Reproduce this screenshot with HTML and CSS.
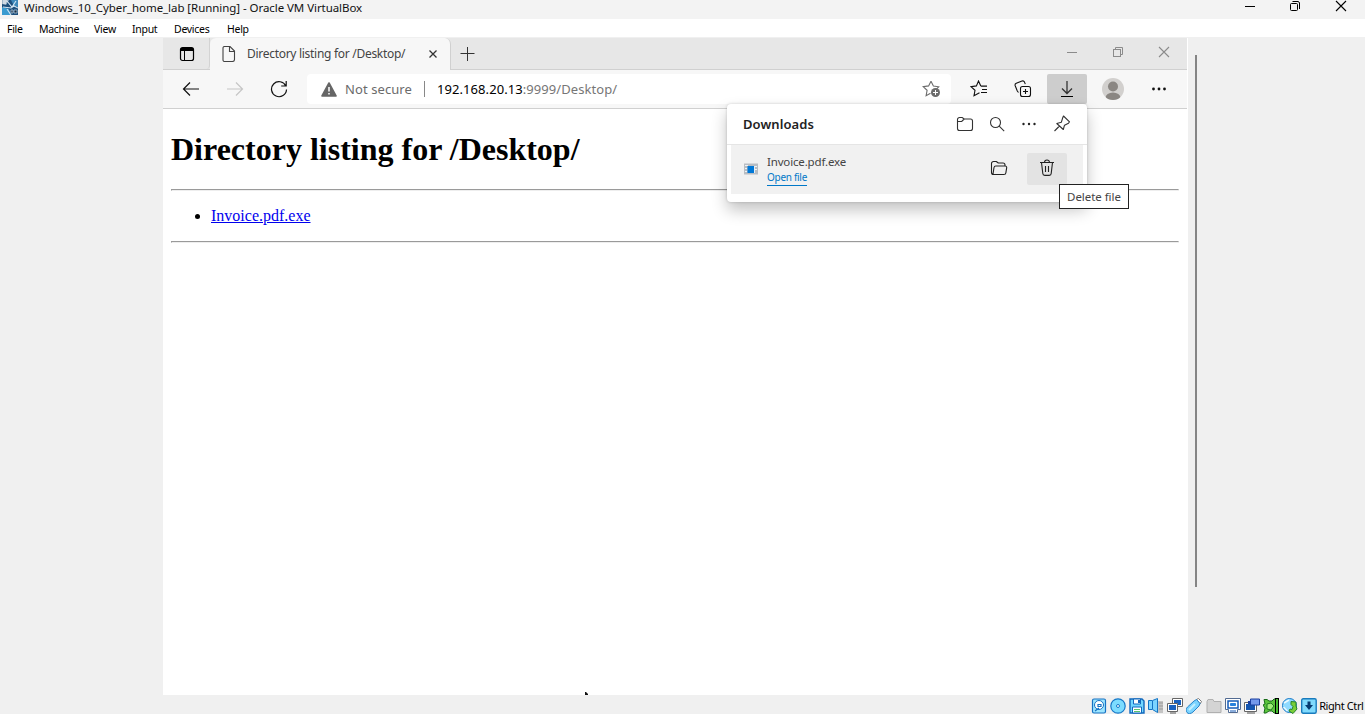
FILE: index.html
```html
<!DOCTYPE html>
<html lang="en">
<head>
<meta charset="utf-8">
<title>Windows_10_Cyber_home_lab [Running] - Oracle VM VirtualBox</title>
<link rel="stylesheet" href="styles.css">
</head>
<body>
<header class="titlebar">
  <svg class="vm-logo" width="16" height="15" viewBox="0 0 16 15">
    <rect width="16" height="15" fill="#1d4f7c"/>
    <path d="M0 0h7L4 5 0 4z" fill="#9eb5c8"/><path d="M1 1h4M1 3h3" stroke="#fff"/>
    <path d="M9 0h7v7l-4-1z" fill="#3d88ba"/><path d="M0 7l7 2 2 6H0z" fill="#3a9bd0"/>
    <path d="M5 1l5 6 4-6M1 7l8 1 3-2 4 2M5 9l4 6" fill="none" stroke="#d5e7f4" stroke-width="1.1"/>
    <path d="M9 10h2v3H9zM12 10h3v3h-3z" fill="#142b43" stroke="#bdd3e5" stroke-width=".7"/>
  </svg>
  <span class="vm-title">Windows_10_Cyber_home_lab [Running] - Oracle VM VirtualBox</span>
  <div class="vm-controls">
    <svg width="46" height="19"><path d="M19 6.500h10" stroke="#000"/></svg>
    <svg width="46" height="19" fill="none" stroke="#000"><rect x="18.500" y="3.500" width="7" height="7" rx="1"/><path d="M20.500 1.500h5.500a2 2 0 0 1 1.500 1.500v6"/></svg>
    <svg width="46" height="19"><path d="M18 1l10 10M28 1L18 11" stroke="#000" stroke-width="1.100"/></svg>
  </div>
</header>
<nav class="menubar">
  <span>File</span><span>Machine</span><span>View</span><span>Input</span><span>Devices</span><span>Help</span>
</nav>
<main class="stage">
  <section class="guest">
    <div class="tabstrip">
      <div class="tab-action"><svg width="16" height="16" fill="none" stroke="#000"><rect x="1.500" y="1.500" width="13" height="13" rx="2" stroke-width="1.200"/><path d="M2 3.500h12" stroke-width="3"/><path d="M5.500 4v10"/></svg></div>
      <div class="tab">
        <svg class="doc" width="14" height="16" fill="none" stroke="#444" stroke-width="1.100"><path d="M2.500.5H8l4.500 4.500v8.500a2 2 0 0 1-2 2h-8a1.500 1.500 0 0 1-1.500-1.500V2A1.500 1.500 0 0 1 2.500.5zM7.500.5v5h5"/></svg>
        <span class="tab-title">Directory listing for /Desktop/</span>
        <svg class="tab-close" width="10" height="10"><path d="M1.500 1.500l7 7M8.500 1.500l-7 7" stroke="#333" stroke-width="1.300"/></svg>
      </div>
      <svg class="new-tab" width="16" height="16"><path d="M8.500 1v14M1.500 7.500h14" stroke="#333"/></svg>
      <div class="win-controls">
        <svg width="46" height="31"><path d="M18 14.500h10" stroke="#8b8b8b"/></svg>
        <svg width="46" height="31" fill="none" stroke="#8b8b8b"><rect x="18.500" y="11.500" width="7" height="7"/><path d="M20.500 11v-1.500h7v7H26"/></svg>
        <svg width="46" height="31"><path d="M18 9l10 10M28 9L18 19" stroke="#8b8b8b" stroke-width="1.100"/></svg>
      </div>
    </div>
    <div class="toolbar">
      <div class="tool"><svg width="18" height="16" fill="none" stroke="#111" stroke-width="1.200"><path d="M17 8H2M8 1.500L1.500 8 8 14.500"/></svg></div>
      <div class="tool"><svg width="18" height="16" fill="none" stroke="#c6c6c6" stroke-width="1.200"><path d="M1 8h15M10 1.500L16.500 8 10 14.500"/></svg></div>
      <div class="tool"><svg width="18" height="18" fill="none" stroke="#111" stroke-width="1.200"><path d="M15.800 6A7.500 7.500 0 1 0 16.500 9.500M16.200 1v5h-5"/></svg></div>
      <div class="address">
        <svg class="warn" width="16" height="15"><path d="M8 1L15 14H1z" fill="#666" stroke="#666" stroke-width="1.600" stroke-linejoin="round"/><path d="M8 5v4.500M8 11v1.500" stroke="#fff" stroke-width="1.500"/></svg>
        <span class="insecure">Not secure</span><i class="divider"></i>
        <span class="url"><b>192.168.20.13</b>:9999/Desktop/</span>
        <svg class="add-star" width="20" height="18" fill="none" stroke="#6c6c6c"><path d="M9 1.200l2.400 4.900 5.300.7-3.900 3.800M8.500 13.300L4.100 15.800l1-5.500L1.200 6.600l5.400-.7L9 1.200" stroke-width="1.100"/><circle cx="13.500" cy="12.500" r="4.500" fill="#6c6c6c" stroke="none"/><path d="M11 12.500h5M13.500 10v5" stroke="#fff"/></svg>
      </div>
      <div class="tool tool-fav"><svg width="18" height="18" fill="none" stroke="#111" stroke-width="1.100"><path d="M10.800 6.100H17M12 9.500h5M11 12.500h6M9.500 12.800L4 15.800l1-5.500-4-3.600 5.400-.8L8.500 1l2.300 5.100"/></svg></div>
      <div class="tool"><svg width="18" height="18" fill="none" stroke="#111" stroke-width="1.100"><rect x="6.500" y="6.500" width="10" height="10" rx="2"/><path d="M11.500 9v5M9 11.500h5M4.500 12.500L3.300 11 1.200 5.800a2 2 0 0 1 1.100-2.500L8 1.100a2 2 0 0 1 2.500 1l.8 2"/></svg></div>
      <div class="dl-button"><svg width="14" height="18" fill="none" stroke="#333" stroke-width="1.300"><path d="M7 1v12M2 8.500l5 5 5-5"/><path d="M1 16.500h12" stroke="#000" stroke-width="1"/></svg></div>
      <div class="tool tool-avatar"><svg width="22" height="22"><defs><clipPath id="face"><circle cx="11" cy="11" r="11"/></clipPath></defs><g clip-path="url(#face)"><rect width="22" height="22" fill="#d2d0ce"/><circle cx="11" cy="8.500" r="5" fill="#8a8682"/><ellipse cx="11" cy="20" rx="7.500" ry="5.500" fill="#8a8682"/></g></svg></div>
      <div class="tool tool-more"><svg width="16" height="4" fill="#111"><circle cx="2.500" cy="2" r="1.400"/><circle cx="8" cy="2" r="1.400"/><circle cx="13.500" cy="2" r="1.400"/></svg></div>
    </div>
    <article class="page">
      <h1>Directory listing for /Desktop/</h1>
      <hr>
      <ul><li><a href="#">Invoice.pdf.exe</a></li></ul>
      <hr>
    </article>
    <aside class="downloads">
      <div class="dl-head">
        <strong>Downloads</strong>
        <div class="dl-icon"><svg width="18" height="16" fill="none" stroke="#333" stroke-width="1.100"><path d="M3.500 1.500h2.700l2 1.500h6.300a2 2 0 0 1 2 2v7.500a2 2 0 0 1-2 2h-11a2 2 0 0 1-2-2v-9a2 2 0 0 1 2-2zM1.500 5.500h4.200L8.200 3"/></svg></div>
        <div class="dl-icon"><svg width="16" height="16" fill="none" stroke="#333" stroke-width="1.100"><circle cx="6.500" cy="6.500" r="5"/><path d="M10.200 10.200l5 5"/></svg></div>
        <div class="dl-icon"><svg width="16" height="4" fill="#222"><circle cx="2.500" cy="2" r="1.200"/><circle cx="8" cy="2" r="1.200"/><circle cx="13.500" cy="2" r="1.200"/></svg></div>
        <div class="dl-icon pin"><svg width="18" height="18" fill="none" stroke="#333" stroke-width="1.100" stroke-linejoin="round"><path d="M10.500 1l6 5.800-1 1.400-4 2-1.200 4.300-6.500-6 4.500-1.200L9.800 2.500zM6.500 11L1.500 16"/></svg></div>
      </div>
      <div class="dl-row">
        <svg class="exe" width="14" height="12"><path d="M0 .5h14v11H0z" fill="#b8bdc3"/><path d="M1 2.500h3M1 5.500h2M1 8.500h2M11 3.500h2M11 6.500h2" stroke="#eef3f7"/><path d="M3.500 3H10v7H3.500z" fill="#0078d7"/><path d="M10 3h1v7h-1z" fill="#e8edf2"/></svg>
        <div class="dl-text"><span class="dl-name">Invoice.pdf.exe</span><a class="dl-open" href="#">Open file</a></div>
        <div class="row-btn"><svg width="18" height="16" fill="none" stroke="#222" stroke-width="1.100" stroke-linejoin="round"><path d="M3.500 14.500a2 2 0 0 1-2-2v-9a2 2 0 0 1 2-2h2.800l2 1.500h4.700a2 2 0 0 1 2 2v1M3 14l1-6.500a1.800 1.800 0 0 1 1.800-1.500h9.400a1.500 1.500 0 0 1 1.500 1.700l-.8 5a2 2 0 0 1-2 1.800H3.500z"/></svg></div>
        <div class="row-btn hot"><svg width="16" height="18" fill="none" stroke="#222" stroke-width="1.100"><path d="M1 3.500h14M5.500 3.500a2.500 2.500 0 0 1 5 0M2.500 3.500l1.300 11a2 2 0 0 0 2 1.900h4.400a2 2 0 0 0 2-1.900l1.300-11M6.500 7v6M9.500 7v6"/></svg></div>
      </div>
      <div class="tooltip">Delete file</div>
    </aside>
    <svg class="cursor" width="4" height="3"><path d="M0 0h1l1 1 1 1v1H0z" fill="#111"/></svg>
  </section>
  <i class="scroll-line"></i>
</main>
<footer class="status">
  <svg width="16" height="16"><rect x="1.500" y="1" width="13" height="14" rx="1.500" fill="#9ce5ff" stroke="#1672c4" stroke-width="1.200"/><circle cx="8" cy="7" r="4.500" fill="#fff" stroke="#1672c4"/><path d="M7 6.500h3v2H7zM4 13l4-3" stroke="#1672c4" fill="none" stroke-width="1.200"/></svg>
  <svg width="16" height="16"><circle cx="8" cy="8" r="7.200" fill="#7cdcff" stroke="#1678c8" stroke-width="1.200"/><circle cx="8" cy="8" r="1.500" fill="#fff" stroke="#1678c8"/></svg>
  <svg width="16" height="16"><path d="M1 1h12l2 2v12H1z" fill="#72d7ff" stroke="#1268bd" stroke-width="1.400"/><path d="M4.500 1h7v5h-7zM3.500 9h9v6h-9z" fill="#fff" stroke="#1268bd"/><path d="M5 11.500h6M5 13.500h6" stroke="#59c46d"/><path d="M9 2h2v3H9z" fill="#1268bd"/></svg>
  <svg width="16" height="16"><path d="M9 3h6v12H9z" fill="#c4c4c4"/><path d="M11 5h4M11 8h4M11 11h4" stroke="#999"/><path d="M.500 2.500h4l5-2v14l-5-3h-4z" fill="#7bd4ff" stroke="#1474c4"/><path d="M4.500 3v8" stroke="#1474c4"/></svg>
  <svg width="16" height="16"><path d="M5.500.5h10v8h-10z" fill="#fff" stroke="#666"/><path d="M7 2h7v5H7z" fill="#1a62c0"/><path d="M.5 5.500h10v8H.5z" fill="#fff" stroke="#666"/><path d="M2 7h7v5H2z" fill="#1a62c0"/><path d="M3 15h6" stroke="#555"/></svg>
  <svg width="16" height="16"><path d="M10.500 1.500l2-1 3 3-1.500 2.500z" fill="#fff" stroke="#777"/><path d="M8 3l2.500-1.500L14 5.500 13 8l-6 6c-2 2-5 2-6 .500-1.500-1.500-1-4 .500-5.500z" fill="#7bd4ff" stroke="#2783c8"/><path d="M3 12l6-6" stroke="#c5efff" stroke-width="2"/></svg>
  <svg width="16" height="16"><path d="M1 14.500v-11l1-2h5l1 2h7v11z" fill="#d4d4d4" stroke="#b0b0b0"/></svg>
  <svg width="16" height="16"><path d="M.5.5h15v11h-3v3h-9v-3h-3z" fill="#fff" stroke="#526b92"/><path d="M3 3h10v7H3z" fill="#fff" stroke="#145bb8" stroke-width="1.500"/><path d="M5.500 5.500h5v2h-5z" fill="#2781dd" stroke="#2781dd"/><path d="M5 13h6" stroke="#145bb8"/></svg>
  <svg width="16" height="16"><path d="M.5 4.500h12v9H.5z" fill="#fff" stroke="#666"/><path d="M2 6h9v6H2z" fill="#1455ae"/><path d="M6.500 1h9v6h-9z" fill="#7398eb" stroke="#1b3fa0"/><path d="M4 3h2.500v3H4z" fill="#1b3fa0"/><path d="M3 15h8" stroke="#555"/></svg>
  <svg width="16" height="16"><path d="M1 1.500h3l2 1.500h3l2-2h2v14h-2l-2-2H6l-3 2H1l1-5-2-3 2-1z" fill="#5bc43c" stroke="#176b18"/><path d="M4 6l4-1 3 3-3 4-4-1z" fill="#a0ec77" stroke="#1f7a20"/><path d="M12 0h4v16h-4z" fill="#000"/><path d="M13 1h2v14h-2z" fill="#44bd2e"/></svg>
  <svg width="16" height="16"><circle cx="7.500" cy="7.500" r="7" fill="#8edaff" stroke="#1678c8"/><path d="M2 5l5-3M1.500 9l4 4" stroke="#e9faff" stroke-width="1.500"/><path d="M9 3.500l5 .5v4l1 3-4 4.500-4-2.500 1-2 2 .5 1-3-2-2z" fill="#79ce38" stroke="#278329"/></svg>
  <svg width="16" height="16"><rect x=".7" y=".7" width="14.500" height="14.500" rx="1.500" fill="#80dafd" stroke="#197bbd" stroke-width="1.400"/><path d="M6.500 3.500h3V7H12l-4 5-4-5h2.500z" fill="#073a70"/></svg>
  <span class="host-key">Right Ctrl</span>
</footer>
</body>
</html>
```
FILE: styles.css
```css
* { box-sizing: border-box; }
body { margin: 0; width: 1365px; height: 714px; overflow: hidden; display: flex; flex-direction: column; background: #f0f0f0; color: #000; font-family: "Noto Sans", "Open Sans", sans-serif; }
svg { display: block; flex: none; }
span, strong { white-space: nowrap; }
.titlebar { height: 19px; flex: none; display: flex; background: #f3f3f3; padding: 0 1px 0 2px; }
.vm-title { margin-left: 6px; font-size: 11.5px; line-height: 15px; letter-spacing: -.06px; color: #111; }
.vm-controls { display: flex; margin-left: auto; }
.menubar { height: 18px; flex: none; display: grid; grid-template-columns: 32px 55px 38px 42px 53px 30px; background: #fff; padding-left: 7px; font-size: 10.5px; line-height: 20px; letter-spacing: -.28px; }
.stage { height: 658px; flex: none; display: flex; padding: 1px 0 0 163px; }
.guest { position: relative; width: 1025px; height: 657px; flex: none; display: flex; flex-direction: column; background: #fff; }
.tabstrip { width: 1024px; height: 32px; flex: none; display: flex; background: #e7e7e7; border-bottom: 1px solid #d0d0d0; }
.tab-action { width: 47px; display: flex; align-items: center; padding-left: 16px; border-right: 1px solid #d3d3d3; border-radius: 0 0 4px 0; }
.tab { width: 241px; height: 32px; display: flex; align-items: center; background: #f7f7f7; border-right: 1px solid #d0d0d0; border-radius: 6px 6px 0 0; padding: 0 12px; }
.tab-title { margin: -1px 0 0 11px; font-size: 12px; letter-spacing: -.29px; color: #444; }
.tab-close { margin-left: auto; }
.new-tab { margin: 8px 0 0 8px; }
.win-controls { display: flex; margin-left: auto; }
.toolbar { width: 1024px; height: 39px; flex: none; display: flex; padding: 4px 6px; background: #f7f7f7; border-bottom: 1px solid #d0d0d0; }
.tool { width: 44px; height: 30px; display: flex; align-items: center; justify-content: center; flex: none; }
.tool-fav { margin-left: 6px; }
.tool-avatar { margin-left: 4px; }
.tool-more { margin-left: 2px; }
.address { width: 644px; height: 30px; margin-left: 6px; padding: 0 9px 0 14px; display: flex; align-items: center; background: #fff; border-radius: 4px; flex: none; }
.insecure { margin-left: 8px; font-size: 13px; letter-spacing: .09px; color: #6b6b6b; }
.divider { width: 1px; height: 16px; margin: 0 12px; background: #888; }
.url { font-size: 13px; letter-spacing: .07px; color: #767676; }
.url b { color: #000; font-weight: 400; }
.add-star { margin-left: auto; }
.dl-button { width: 40px; height: 30px; margin-left: 2px; display: flex; align-items: center; justify-content: center; background: #cdcdcd; border-radius: 2px; flex: none; }
.page { margin: 0 8px; font-family: "Liberation Serif", "Times New Roman", serif; font-size: 16px; width: 1008px; }
.page h1 { font-size: 32px; margin: 21px 0; line-height: 38px; }
.page hr { margin: 0; box-sizing: content-box; }
.page ul { margin: 16px 0; padding-left: 40px; line-height: 18px; }
.page a { color: #00e; }
.downloads { position: absolute; left: 564px; top: 66px; width: 360px; height: 98px; background: #fff; border-radius: 4px; box-shadow: 0 8px 16px rgba(0,0,0,.24), 0 0 3px rgba(0,0,0,.18); }
.dl-head { height: 41px; display: flex; align-items: center; padding: 0 9px 0 16px; border-bottom: 1px solid #e5e5e5; }
.dl-head strong { font-size: 13px; font-weight: 600; letter-spacing: .08px; color: #222; margin-right: auto; }
.dl-icon { width: 32px; display: flex; justify-content: center; }
.pin { width: 33px; }
.dl-row { height: 49px; margin: 0 4px; padding: 0 16px 2px 13px; background: #f1f1f1; display: flex; align-items: center; }
.dl-text { display: flex; flex-direction: column; align-items: flex-start; margin: 2px auto 0 9px; }
.dl-name { font-size: 11.5px; line-height: 16px; letter-spacing: -.16px; color: #444; }
.dl-open { font-size: 10px; line-height: 15px; letter-spacing: -.29px; color: #0078c8; text-decoration: none; border-bottom: 1px solid #0078c8; }
.row-btn { width: 40px; height: 32px; display: flex; align-items: center; justify-content: center; margin-left: 8px; padding-bottom: 2px; border-radius: 2px; }
.hot { background: #e3e3e3; }
.tooltip { position: absolute; left: 332px; top: 80px; width: 70px; height: 25px; display: flex; align-items: center; justify-content: center; background: #fff; border: 1px solid #222; font-size: 11.5px; letter-spacing: -.05px; color: #444; }
.cursor { position: absolute; left: 422px; bottom: 0; }
.scroll-line { width: 2px; height: 532px; margin: 17px 0 0 7px; background: #858585; }
.status { height: 19px; flex: none; display: flex; gap: 3.1px; padding: 3px 0 0 1091px; }
.host-key { margin-left: -1px; font-size: 11px; line-height: 15px; letter-spacing: -.4px; }
```
